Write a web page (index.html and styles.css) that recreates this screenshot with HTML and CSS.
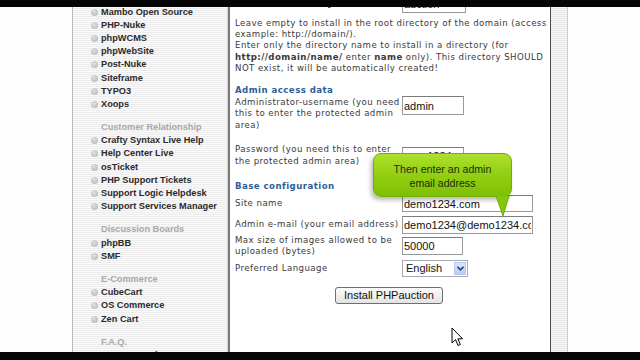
FILE: index.html
```html
<!DOCTYPE html>
<html>
<head>
<meta charset="utf-8">
<link rel="stylesheet" href="styles.css">
</head>
<body>
<div class="screen">
  <div class="bar bar-top"></div>
  <div class="viewport">
    <div class="gutter"></div>
    <nav class="sidebar">
      <ul class="menu">
        <li>Mambo Open Source</li>
        <li>PHP-Nuke</li>
        <li>phpWCMS</li>
        <li>phpWebSite</li>
        <li>Post-Nuke</li>
        <li>Siteframe</li>
        <li>TYPO3</li>
        <li>Xoops</li>
        <li class="head">Customer Relationship</li>
        <li>Crafty Syntax Live Help</li>
        <li>Help Center Live</li>
        <li>osTicket</li>
        <li>PHP Support Tickets</li>
        <li>Support Logic Helpdesk</li>
        <li>Support Services Manager</li>
        <li class="head">Discussion Boards</li>
        <li>phpBB</li>
        <li>SMF</li>
        <li class="head">E-Commerce</li>
        <li>CubeCart</li>
        <li>OS Commerce</li>
        <li>Zen Cart</li>
        <li class="head">F.A.Q.</li>
        <li>FAQMasterFlex</li>
      </ul>
    </nav>
    <main class="content">
      <div class="row r-install">
        <div class="lbl">Install in directory</div>
        <div class="field"><input class="inp w64" value="auction" readonly></div>
      </div>
      <p class="desc">Leave empty to install in the root directory of the domain (access<br>example: http://domain/).<br>Enter only the directory name to install in a directory (for<br><b>http://domain/name/</b> enter <b>name</b> only). This directory SHOULD<br>NOT exist, it will be automatically created!</p>
      <h3 class="sec s-admin">Admin access data</h3>
      <div class="row r-user">
        <div class="lbl">Administrator-username (you need<br>this to enter the protected admin<br>area)</div>
        <div class="field"><input class="inp w62 h19" value="admin" readonly></div>
      </div>
      <div class="row r-pass">
        <div class="lbl">Password (you need this to enter<br>the protected admin area)</div>
        <div class="field"><input class="inp w62" value="pass1234" readonly></div>
      </div>
      <h3 class="sec s-base">Base configuration</h3>
      <div class="row r-site">
        <div class="lbl">Site name</div>
        <div class="field"><input class="inp w131 h17" value="demo1234.com" readonly></div>
      </div>
      <div class="row r-mail">
        <div class="lbl">Admin e-mail (your email address)</div>
        <div class="field"><input class="inp w131" value="demo1234@demo1234.com" readonly></div>
      </div>
      <div class="row r-size">
        <div class="lbl">Max size of images allowed to be<br>uploaded (bytes)</div>
        <div class="field"><input class="inp w61" value="50000" readonly></div>
      </div>
      <div class="row r-lang">
        <div class="lbl">Preferred Language</div>
        <div class="field">
          <div class="select"><span class="sel-text">English</span><span class="sel-btn"><svg width="7" height="5" viewBox="0 0 7 5"><path d="M0.5 0.8 L3.5 3.8 L6.5 0.8" fill="none" stroke="#2a3f8f" stroke-width="1.6"/></svg></span></div>
        </div>
      </div>
      <div class="actions"><button class="btn">Install PHPauction</button></div>

      <div class="tip">
        <div class="tip-box">Then enter an admin<br>email address</div>
        <svg class="tip-tail" width="22" height="22" viewBox="0 0 22 22"><path d="M3 0 L10 20 L16 0 Z" fill="#86c60c" stroke="#6fae05" stroke-width="1"/><path d="M3.6 0 L15.4 0" stroke="#86c60c" stroke-width="2"/></svg>
      </div>
    </main>
    <div class="rstripe"></div>
    <div class="rest"></div>
    <svg class="cursor" width="13" height="20" viewBox="0 0 13 20"><path d="M1 1 L1 16 L4.5 12.6 L7 18.5 L9.3 17.5 L6.9 11.8 L11.6 11.8 Z" fill="#fff" stroke="#000" stroke-width="1" stroke-linejoin="round"/></svg>
  </div>
  <div class="bar bar-bottom"></div>
</div>
</body>
</html>
```
FILE: styles.css
```css
html, body {
  margin: 0;
  padding: 0;
  background: #fff;
  overflow: hidden;
}
.screen {
  width: 640px;
  height: 360px;
  display: flex;
  flex-direction: column;
}
.bar {
  background: #050505;
  flex: none;
}
.bar-top { height: 7px; }
.bar-bottom { height: 8px; }
.viewport {
  flex: 1;
  display: flex;
  overflow: hidden;
  position: relative;
}
.gutter {
  width: 72px;
  flex: none;
  background: #fdfdfd;
}
.sidebar {
  width: 154px;
  flex: none;
  border-left: 1px solid #b9b9b9;
  border-right: 1px solid #d4d4d4;
  background: repeating-linear-gradient(to bottom, #fafafa 0, #fafafa 1px, #ececec 1px, #ececec 2px);
  overflow: hidden;
}
.menu {
  list-style: none;
  margin: -1px 0 0 0;
  padding: 0 0 0 18px;
  font-family: "Liberation Sans", Arial, sans-serif;
  font-weight: bold;
  font-size: 9.2px;
  color: #2b2b2b;
}
.menu li {
  height: 13.1px;
  line-height: 13px;
  display: flex;
  align-items: center;
  gap: 3px;
  white-space: nowrap;
}
.menu li::before {
  content: "";
  width: 7px;
  height: 7px;
  border-radius: 50%;
  background: radial-gradient(circle at 40% 35%, #e0e0e0 0, #c4c4c4 60%, #b5b5b5 100%);
  flex: none;
}
.menu li.head {
  color: #a9a9a9;
  margin-top: 10.5px;
  padding-left: 10px;
}
.menu li.head::before { display: none; }

.content {
  width: 315px;
  flex: none;
  border-left: 2px solid #7a7a7a;
  padding: 0 0 0 5px;
  margin-top: -12px;
  font-family: "DejaVu Sans", Verdana, sans-serif;
  font-size: 8.6px;
  letter-spacing: 0.45px;
  color: #3a3a3a;
  position: relative;
  background: #fff;
}
.row {
  display: grid;
  grid-template-columns: 167px auto;
  align-items: center;
}
.lbl {
  line-height: 11.4px;
  white-space: nowrap;
}
.r-install .lbl { font-weight: bold; }
.inp {
  display: block;
  box-sizing: border-box;
  height: 18px;
  margin: 0;
  border: 1px solid #9a9a9a;
  border-top-color: #7d7d7d;
  padding: 0 1px;
  font-family: "Liberation Sans", Arial, sans-serif;
  font-size: 11px;
  letter-spacing: 0;
  color: #111;
  background: #fff;
  outline: none;
}
.h19 { height: 19px; }
.h17 { height: 17px; }
.w64 { width: 64px; }
.w62 { width: 62px; }
.w61 { width: 61px; }
.w131 { width: 131px; }
.desc {
  margin: 5px 0 0 0;
  line-height: 11.2px;
  white-space: nowrap;
}
.sec {
  margin: 10px 0 1px 0;
  font-size: 8.6px;
  line-height: 11px;
  font-weight: bold;
  color: #2f5d99;
}
.s-admin { margin-top: 11px; margin-bottom: 0; }
.r-user { align-items: start; }
.r-user .lbl { padding-top: 1px; }
.r-pass { margin-top: 13px; }
.s-base { margin-top: 14px; margin-bottom: 3px; }
.r-mail { margin-top: 4px; }
.r-size { margin-top: 1px; }
.r-lang { margin-top: 2px; }
.select {
  box-sizing: border-box;
  width: 66px;
  height: 17px;
  border: 1px solid #a5acb5;
  display: flex;
  align-items: center;
  background: #fff;
  font-family: "Liberation Sans", Arial, sans-serif;
  font-size: 11px;
  letter-spacing: 0;
  color: #111;
}
.sel-text { flex: 1; padding-left: 3px; }
.sel-btn {
  width: 12px;
  height: 13px;
  margin-right: 1px;
  background: linear-gradient(to bottom, #dbe6fb, #b9cdf3);
  border: 1px solid #b5c6ea;
  box-sizing: border-box;
  display: flex;
  align-items: center;
  justify-content: center;
}
.actions {
  display: flex;
  justify-content: center;
  margin-top: 10px;
  padding-right: 7px;
}
.btn {
  height: 17px;
  padding: 0 8px;
  border: 1px solid #6f6f6f;
  border-radius: 3px;
  background: linear-gradient(to bottom, #fbfbfb, #e4e4e4);
  font-family: "Liberation Sans", Arial, sans-serif;
  font-size: 11px;
  letter-spacing: 0;
  color: #111;
  line-height: 15px;
}
.tip {
  position: absolute;
  left: 143px;
  top: 158px;
  width: 139px;
  letter-spacing: 0;
}
.tip-box {
  box-sizing: border-box;
  height: 44px;
  border-radius: 8px;
  border: 1px solid #6fae05;
  background: linear-gradient(to bottom, #aee02c 0%, #94d014 45%, #7fc004 100%);
  box-shadow: -2px 3px 4px rgba(0,0,0,0.28);
  font-family: "Liberation Sans", Arial, sans-serif;
  font-size: 10.6px;
  line-height: 13.5px;
  color: #17300a;
  text-align: center;
  padding-top: 9px;
}
.tip-tail {
  position: absolute;
  left: 120px;
  top: 43px;
}
.rstripe {
  width: 16px;
  flex: none;
  border-left: 1px solid #4a4a4a;
  border-right: 1px solid #cfcfcf;
  background: repeating-linear-gradient(to bottom, #f7f7f7 0, #f7f7f7 1px, #e6e6e6 1px, #e6e6e6 2px);
}
.rest {
  flex: 1;
  background: #fdfdfd;
}
.cursor {
  position: absolute;
  left: 451px;
  top: 320px;
}
```
